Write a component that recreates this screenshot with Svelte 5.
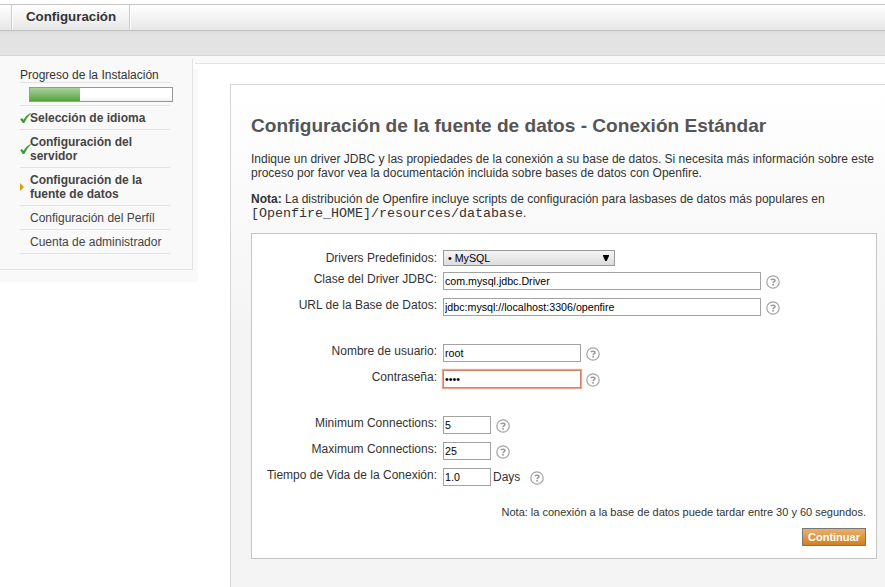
<script>
  const steps = [
    { text: 'Selección de idioma', state: 'done' },
    { text: 'Configuración del servidor', state: 'done' },
    { text: 'Configuración de la fuente de datos', state: 'current' },
    { text: 'Configuración del Perfíl', state: '' },
    { text: 'Cuenta de administrador', state: '' }
  ];
  const groups = [
    [
      { label: 'Clase del Driver JDBC:', value: 'com.mysql.jdbc.Driver', size: 'long' },
      { label: 'URL de la Base de Datos:', value: 'jdbc:mysql://localhost:3306/openfire', size: 'long' }
    ],
    [
      { label: 'Nombre de usuario:', value: 'root', size: 'medium' },
      { label: 'Contraseña:', value: 'root', size: 'medium', type: 'password' }
    ],
    [
      { label: 'Minimum Connections:', value: '5', size: 'short' },
      { label: 'Maximum Connections:', value: '25', size: 'short' },
      { label: 'Tiempo de Vida de la Conexión:', value: '1.0', size: 'short', unit: 'Days' }
    ]
  ];
</script>

<div class="page">
  <nav class="tabs"><span class="tab">Configuración</span></nav>
  <div class="subbar"></div>
  <div class="body">
    <aside class="side">
      <div class="side-inner">
        <div class="progress-title">Progreso de la Instalación</div>
        <div class="progress-row"><div class="bar"><div class="fill"></div></div></div>
        {#each steps as step}
          <div class="step {step.state}">
            <span class="mark">
              {#if step.state === 'done'}
                <svg width="11" height="11" viewBox="0 0 11 11"><path d="M0.2 6.2 L1.9 4.9 L3.5 6.7 Q6 2.4 10.4 0 L10.9 0.6 Q7 4.4 4.3 10 L2.8 10 Z" fill="#3f9a35" /></svg>
              {:else if step.state === 'current'}
                <svg width="4" height="8" viewBox="0 0 4 8"><path d="M0 0 L4 4 L0 8 Z" fill="#d3a100" /></svg>
              {/if}
            </span>
            <span>{step.text}</span>
          </div>
        {/each}
      </div>
    </aside>
    <main>
      <section class="content">
        <h1>Configuración de la fuente de datos - Conexión Estándar</h1>
        <p>Indique un driver JDBC y las propiedades de la conexión a su base de datos. Si necesita más información sobre este<br />proceso por favor vea la documentación incluida sobre bases de datos con Openfire.</p>
        <p class="note"><b>Nota:</b> La distribución de Openfire incluye scripts de configuración para lasbases de datos más populares en<br /><code>[Openfire_HOME]/resources/database</code>.</p>
        <form class="box">
          <div class="row first">
            <span class="label">Drivers Predefinidos:</span>
            <button type="button" class="select">• MySQL<svg width="6" height="6" viewBox="0 0 6 6"><path d="M0 0H6V1L3.7 6H2.3L0 1Z" fill="#000" /></svg></button>
          </div>
          {#each groups as group}
            <div class="group">
              {#each group as f}
                <div class="row">
                  <span class="label">{f.label}</span>
                  <input class={f.size} class:focus={f.type === 'password'} type={f.type ?? 'text'} value={f.value} />
                  {#if f.unit}<span class="unit">{f.unit}</span>{/if}
                  <svg class="help" width="14" height="14" viewBox="0 0 14 14">
                    <circle cx="7" cy="7" r="6.2" fill="#fff" stroke="#a3a3a3" stroke-width="1.2" />
                    <path d="M4.7 5 Q5.6 4.3 7 4.3 Q9 4.3 9 5.6 Q9 6.4 7.9 6.9 Q7.1 7.3 7.1 8.2" fill="none" stroke="#999" stroke-width="1.5" />
                    <rect x="6.2" y="9.1" width="1.7" height="1.5" fill="#999" />
                  </svg>
                </div>
              {/each}
            </div>
          {/each}
          <div class="wait">Nota: la conexión a la base de datos puede tardar entre 30 y 60 segundos.</div>
          <div class="actions"><button type="button" class="continue">Continuar</button></div>
        </form>
      </section>
    </main>
  </div>
</div>

<style>
  :global(body) { margin: 0; background: #fff; overflow: hidden; }
  .page { width: 885px; height: 587px; box-sizing: border-box; padding-top: 4px; overflow: hidden; display: flex; flex-direction: column; font: 12px/14px "Liberation Sans", Arial, sans-serif; color: #333; }
  .tabs { height: 25px; flex: none; border-top: 1px solid #c5c5c5; border-bottom: 1px solid #c0c0c0; background: linear-gradient(#fff, #e7e7e7); display: flex; padding-left: 11px; }
  .tab { box-sizing: border-box; width: 119px; height: 24px; border-left: 1px solid #ccc; border-right: 1px solid #ccc; box-shadow: inset 1px 0 #fff, 1px 0 #fff; padding-left: 14px; font-size: 13.3px; font-weight: bold; line-height: 23px; }
  .subbar { height: 24px; flex: none; background: linear-gradient(#dcdcdc, #e3e3e3 4px); border-bottom: 1px solid #d6d6d6; }
  .body { flex: 1; min-height: 0; display: flex; background: linear-gradient(#f9f9f9 7px, #fff 7px); }
  .side { box-sizing: border-box; width: 198px; height: 226px; flex: none; background: linear-gradient(#fff, #fff) 193px 7px / 5px 6px no-repeat #f9f9f9; padding-top: 3px; }
  .side-inner { box-sizing: border-box; width: 193px; height: 211px; border: solid #e3e3e3; border-width: 0 1px 1px 0; padding: 9px 0 0 20px; }
  .progress-title { width: 150px; height: 14px; border-bottom: 1px solid #e3e3e3; }
  .progress-row { width: 150px; height: 22px; border-bottom: 1px solid #e3e3e3; display: flex; align-items: flex-start; }
  .bar { flex: none; box-sizing: border-box; width: 144px; height: 15px; margin: 4px 0 0 9px; border: 1px solid #979797; background: linear-gradient(#fff 70%, #eee); }
  .fill { width: 50px; height: 13px; background: linear-gradient(#add29f, #55a43c); }
  .step { width: 150px; box-sizing: border-box; border-bottom: 1px solid #e3e3e3; display: flex; align-items: center; padding: 5px 18px 4px 0; color: #444; }
  .step:not(.done):not(.current) { padding-right: 0; }
  .done, .current { font-weight: bold; }
  .mark { width: 10px; flex: none; display: flex; }
  .mark svg { flex: none; }
  main { flex: 1; min-width: 0; margin-top: 7px; border-top: 1px solid #e3e3e3; margin-left: -3px; padding: 20px 0 0 35px; background: #fff; background-clip: content-box; }
  .content { box-sizing: border-box; height: 530px; border: solid #d6d6d6; border-width: 1px 0 0 1px; padding: 30px 8px 0 20px; background: linear-gradient(#fff, #f4f4f4 250px); }
  h1 { margin: 0; font-size: 19.08px; line-height: 22px; color: #555; white-space: nowrap; }
  p { margin: 15px 0 0; white-space: nowrap; }
  .note { margin-top: 12px; }
  code { font: 13.33px/14px "Liberation Mono", monospace; }
  .box { box-sizing: border-box; width: 626px; height: 326px; margin-top: 12px; border: 1px solid #c5c5c5; background: #fff; padding: 16px 10px 0 0; }
  .row { display: flex; height: 26px; align-items: flex-start; }
  .row.first { height: 22px; }
  .label { width: 185px; flex: none; text-align: right; margin-right: 6px; }
  .first .label { padding-top: 1px; }
  .group { margin-bottom: 20px; }
  .select { box-sizing: border-box; width: 172px; height: 16px; border: 1px solid #999; border-radius: 0; background: linear-gradient(#f5f5f5, #dcdcdc); display: flex; align-items: center; justify-content: space-between; padding: 0 5px 0 4px; font: 10.67px/14px "Liberation Sans", Arial, sans-serif; color: #000; }
  input { box-sizing: border-box; height: 18px; border: 1px solid #a2a2a2; border-radius: 0; outline: none; padding: 0 1px; margin: 0; font: 10.67px "Liberation Sans", Arial, sans-serif; color: #000; background: #fff; }
  .long { width: 318px; }
  .medium { width: 138px; }
  .short { width: 48px; }
  .focus { border-color: #cf8068; box-shadow: 0 0 1px 1px #eda68c; }
  .help { margin: 3px 0 0 5px; flex: none; }
  .unit { margin: 2px 5px 0 2px; }
  .wait { margin-top: -9px; text-align: right; font-size: 11px; line-height: 14px; }
  .actions { display: flex; justify-content: flex-end; padding-top: 9px; }
  .continue { box-sizing: border-box; width: 64px; height: 18px; padding: 0; border: 1px solid #777; border-radius: 0; background: linear-gradient(#e8b06c, #d37f22); color: #fff; font: bold 11px/14px "Liberation Sans", Arial, sans-serif; }
</style>
